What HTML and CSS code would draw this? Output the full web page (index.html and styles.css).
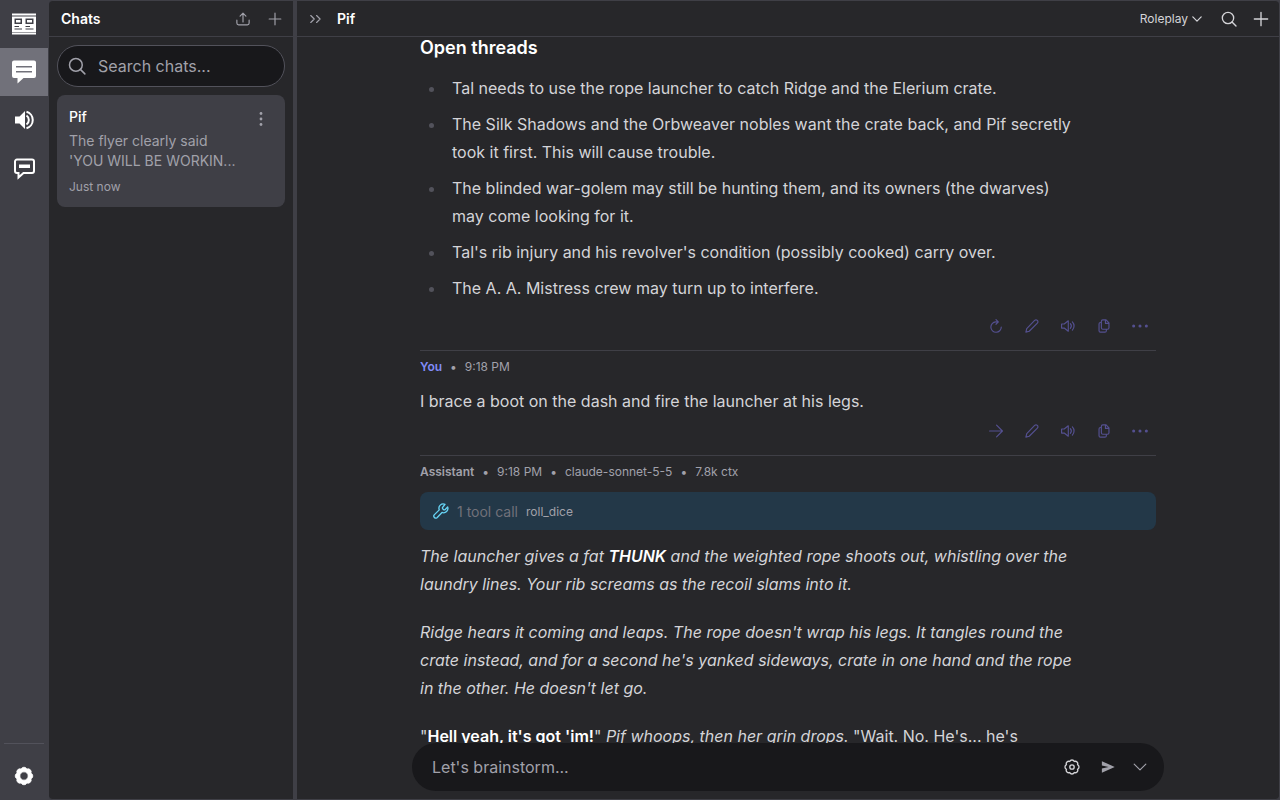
FILE: index.html
```html
<!DOCTYPE html>
<html lang="en">
<head>
    <meta charset="UTF-8">
    <meta name="viewport" content="width=device-width, initial-scale=1.0">
    <title>Pif - Chats</title>
    <link rel="stylesheet" href="styles.css">
</head>
<body>
    <!-- Shared icons -->
    <svg class="sprite" aria-hidden="true">
        <symbol id="plus" viewBox="0 0 24 24"><path d="M12 2v20M2 12h20"/></symbol>
        <symbol id="search" viewBox="0 0 24 24"><circle cx="10.5" cy="10.5" r="8.5"/><path d="M16.5 16.5l6 6"/></symbol>
        <symbol id="chevron" viewBox="0 0 24 24"><path d="M2 7l10 10L22 7"/></symbol>
        <symbol id="pencil" viewBox="0 0 24 24"><path d="M16.5 2.5a3.3 3.3 0 0 1 4.7 4.7L7.2 21 1.5 22.5 3 16.5z"/></symbol>
        <symbol id="speaker" viewBox="0 0 24 24"><path d="M1 8.5v7h4.5l7 5.5V3l-7 5.500zM16 8a6 6 0 0 1 0 8M19.5 5a10 10 0 0 1 0 14"/></symbol>
        <symbol id="copy" viewBox="0 0 24 24"><path d="M10 1.5h5.5l5 5V15a2.5 2.5 0 0 1-2.5 2.500h-8A2.5 2.5 0 0 1 7.500 15V4A2.500 2.500 0 0 1 10 1.500zM14.500 2v5.500H20M7.500 6H6a2.500 2.500 0 0 0-2.500 2.500V20A2.500 2.500 0 0 0 6 22.500h7.500A2.500 2.500 0 0 0 16 20v-2.500"/></symbol>
        <symbol id="dots" viewBox="0 0 24 24"><g fill="currentColor" stroke="none"><circle cx="2.5" cy="12" r="2.3"/><circle cx="12" cy="12" r="2.3"/><circle cx="21.5" cy="12" r="2.3"/></g></symbol>
    </svg>

    <div class="app">
        <nav class="rail" aria-label="Main">
            <a class="rail-link" href="#library" aria-label="Library">
                <svg class="icon-24" viewBox="0 0 24 24">
                    <path d="M0 2.500h24M0 21.500h24"/>
                    <path fill="currentColor" stroke="none" fill-rule="evenodd" d="M0 4.500h24V20H0zM2.500 6.500V12H10V6.500zM4 8h4.500v2.500H4zM13.500 6.500V12H21.500V6.500zM15 8h5v2.500h-5zM2.500 14v1H7v-1zM2.500 16.500v1H10v-1zM13.500 14v1H18v-1zM13.500 16.500v1h8v-1z"/>
                </svg>
            </a>
            <a class="rail-link active" href="#chats" aria-label="Chats">
                <svg class="icon-24" viewBox="0 0 24 24">
                    <path fill="currentColor" stroke="none" fill-rule="evenodd" d="M2 .5h20a2 2 0 0 1 2 2V16a2 2 0 0 1-2 2H11.5L5.5 23.5V18H2a2 2 0 0 1-2-2V2.5A2 2 0 0 1 2 .5zM4 6v1.500h16V6zM4 11v1.500h16V11z"/>
                </svg>
            </a>
            <a class="rail-link" href="#audio" aria-label="Audio">
                <svg class="icon-24" viewBox="0 0 24 24">
                    <path fill="currentColor" stroke="none" d="M3 8.500h4.500L13 3v18l-5.500-5.500H3z"/>
                    <path d="M14.500 7.500a5.500 5.500 0 0 1 0 9M14.500 3.800a8.500 8.500 0 0 1 0 16.400"/>
                </svg>
            </a>
            <a class="rail-link" href="#prompts" aria-label="Prompts">
                <svg class="icon-24" viewBox="0 0 24 24">
                    <path d="M5 3.500h15a2 2 0 0 1 2 2V15a2 2 0 0 1-2 2h-8.500L6.500 21.500V17H5a2 2 0 0 1-2-2V5.500a2 2 0 0 1 2-2z"/>
                    <rect x="7.500" y="9" width="10" height="2.500" stroke-width="1" fill="currentColor"/>
                </svg>
            </a>
            <div class="rail-bottom">
                <a class="rail-link" href="#settings" aria-label="Settings">
                    <svg class="icon-20" viewBox="0 0 24 24">
                        <path fill="currentColor" fill-rule="evenodd" stroke-width="1" d="M20.300 15.400a3.700 3.700 0 0 1-4.900 4.900 3.700 3.700 0 0 1-6.800 0 3.700 3.700 0 0 1-4.900-4.900 3.700 3.700 0 0 1 0-6.800 3.700 3.700 0 0 1 4.900-4.900 3.700 3.700 0 0 1 6.800 0 3.700 3.700 0 0 1 4.900 4.900 3.700 3.700 0 0 1 0 6.800zM17 12a5 5 0 1 0-10 0 5 5 0 0 0 10 0z"/>
                    </svg>
                </a>
            </div>
        </nav>

        <aside class="chats">
            <header class="bar">
                <h2>Chats</h2>
                <div class="bar-tools">
                    <button aria-label="Import chat">
                        <svg class="icon-14" viewBox="0 0 24 24"><path d="M12 17V2.500M7 7l5-5 5 5M1.500 14v5a3 3 0 0 0 3 3h15a3 3 0 0 0 3-3v-5"/></svg>
                    </button>
                    <button aria-label="New chat"><svg class="icon-14"><use href="#plus"/></svg></button>
                </div>
            </header>
            <label class="search">
                <svg class="icon-18"><use href="#search"/></svg>
                <input type="search" placeholder="Search chats..." aria-label="Search chats">
            </label>
            <article class="chat-card">
                <div class="card-text">
                    <h3>Pif</h3>
                    <p class="preview">The flyer clearly said 'YOU WILL BE WORKIN...</p>
                    <time>Just now</time>
                </div>
                <button class="card-menu" aria-label="Chat menu">
                    <svg class="icon-16" viewBox="0 0 16 16"><g fill="currentColor" stroke="none"><circle cx="8" cy="2.500" r="1.400"/><circle cx="8" cy="8" r="1.400"/><circle cx="8" cy="13.500" r="1.400"/></g></svg>
                </button>
            </article>
        </aside>

        <main class="conversation">
            <header class="bar">
                <button aria-label="Toggle chat list">
                    <svg class="icon-14" viewBox="0 0 24 24"><path d="M3 6l6 6-6 6M13 6l6 6-6 6"/></svg>
                </button>
                <h1>Pif</h1>
                <div class="bar-tools light">
                    <button class="mode">Roleplay <svg class="icon-10"><use href="#chevron"/></svg></button>
                    <button aria-label="Search messages"><svg class="icon-16"><use href="#search"/></svg></button>
                    <button aria-label="New message"><svg class="icon-16"><use href="#plus"/></svg></button>
                </div>
            </header>

            <div class="messages">
                <section class="message">
                    <div class="prose">
                        <h3>Open threads</h3>
                        <ul>
                            <li>Tal needs to use the rope launcher to catch Ridge and the Elerium crate.</li>
                            <li>The Silk Shadows and the Orbweaver nobles want the crate back, and Pif secretly took it first. This will cause trouble.</li>
                            <li>The blinded war-golem may still be hunting them, and its owners (the dwarves) may come looking for it.</li>
                            <li>Tal's rib injury and his revolver's condition (possibly cooked) carry over.</li>
                            <li>The A. A. Mistress crew may turn up to interfere.</li>
                        </ul>
                    </div>
                    <div class="actions">
                        <button aria-label="Regenerate"><svg class="icon-14" viewBox="0 0 24 24"><path d="M12 1l4 4-4 4M16 5h-4.500a8.900 8.900 0 1 0 9.500 9"/></svg></button>
                        <button aria-label="Edit"><svg class="icon-14"><use href="#pencil"/></svg></button>
                        <button aria-label="Read aloud"><svg class="icon-14"><use href="#speaker"/></svg></button>
                        <button aria-label="Copy"><svg class="icon-14"><use href="#copy"/></svg></button>
                        <button aria-label="More"><svg class="icon-16"><use href="#dots"/></svg></button>
                    </div>
                </section>

                <section class="message">
                    <div class="meta"><strong class="you">You</strong><span>•</span><time>9:18 PM</time></div>
                    <div class="prose">
                        <p>I brace a boot on the dash and fire the launcher at his legs.</p>
                    </div>
                    <div class="actions">
                        <button aria-label="Continue"><svg class="icon-14" viewBox="0 0 24 24"><path d="M1 12h22M13 2l10 10-10 10"/></svg></button>
                        <button aria-label="Edit"><svg class="icon-14"><use href="#pencil"/></svg></button>
                        <button aria-label="Read aloud"><svg class="icon-14"><use href="#speaker"/></svg></button>
                        <button aria-label="Copy"><svg class="icon-14"><use href="#copy"/></svg></button>
                        <button aria-label="More"><svg class="icon-16"><use href="#dots"/></svg></button>
                    </div>
                </section>

                <section class="message">
                    <div class="meta"><strong>Assistant</strong><span>•</span><time>9:18 PM</time><span>•</span><span>claude-sonnet-5-5</span><span>•</span><span>7.8k ctx</span></div>
                    <button class="tool-call">
                        <svg class="icon-16" viewBox="0 0 24 24"><path d="M14.500 6.500a1.400 1.400 0 0 0 0 2l1.500 1.500a1.400 1.400 0 0 0 2 0l4-4a6.500 6.500 0 0 1-8.500 8.200L6 22a3 3 0 0 1-4.200-4.200l7.600-7.500A6.500 6.500 0 0 1 18 1.900z"/></svg>
                        <span class="tool-count">1 tool call</span>
                        <span class="tool-name">roll_dice</span>
                    </button>
                    <div class="prose">
                        <p><em>The launcher gives a fat <strong>THUNK</strong> and the weighted rope shoots out, whistling over the laundry lines. Your rib screams as the recoil slams into it.</em></p>
                        <p><em>Ridge hears it coming and leaps. The rope doesn't wrap his legs. It tangles round the crate instead, and for a second he's yanked sideways, crate in one hand and the rope in the other. He doesn't let go.</em></p>
                        <p>"<strong>Hell yeah, it's got 'im!</strong>" <em>Pif whoops, then her grin drops.</em> "Wait. No. He's... he's</p>
                    </div>
                </section>
            </div>

            <form class="composer">
                <input type="text" placeholder="Let's brainstorm..." aria-label="Message">
                <button type="button" class="options" aria-label="Options">
                    <svg class="icon-16" viewBox="0 0 24 24"><path d="M20.300 15.400a3.700 3.700 0 0 1-4.900 4.900 3.700 3.700 0 0 1-6.800 0 3.700 3.700 0 0 1-4.900-4.900 3.700 3.700 0 0 1 0-6.800 3.700 3.700 0 0 1 4.900-4.900 3.700 3.700 0 0 1 6.800 0 3.700 3.700 0 0 1 4.900 4.900 3.700 3.700 0 0 1 0 6.800z"/><circle cx="12" cy="12" r="3.300"/></svg>
                </button>
                <button type="submit" class="send" aria-label="Send">
                    <svg class="icon-14" viewBox="0 0 24 24"><path fill="currentColor" stroke="none" d="M1.500 2L23.500 12 1.500 22V14.500L13 12 1.500 9.500z"/></svg>
                </button>
                <button type="button" class="send" aria-label="More options"><svg class="icon-14"><use href="#chevron"/></svg></button>
            </form>
        </main>
    </div>
</body>
</html>
```
FILE: styles.css
```css
* {
    box-sizing: border-box;
}

body {
    margin: 0;
    height: 100vh;
    overflow: hidden;
    background: #3f3f46;
    color: #d4d4d8;
    font-family: Inter, "Liberation Sans", sans-serif;
    font-size: 16px;
}

h1, h2, h3, p, ul {
    margin: 0;
    padding: 0;
}

button, input {
    font: inherit;
    color: inherit;
    background: none;
    border: 0;
    padding: 0;
    outline: none;
}

button {
    display: flex;
    align-items: center;
    justify-content: center;
    cursor: pointer;
}

svg {
    flex: none;
    fill: none;
    stroke: currentColor;
    stroke-width: 2;
    stroke-linecap: round;
    stroke-linejoin: round;
}

.sprite {
    position: absolute;
    width: 0;
    height: 0;
}

.icon-10 { width: 10px; height: 10px; stroke-width: 3; }
.icon-14 { width: 14px; height: 14px; }
.icon-16 { width: 16px; height: 16px; }
.icon-18 { width: 18px; height: 18px; }
.icon-20 { width: 20px; height: 20px; }
.icon-24 { width: 24px; height: 24px; }

.app {
    display: flex;
    height: 100%;
}

/* Left icon rail */
.rail {
    display: flex;
    flex-direction: column;
    width: 49px;
    padding-right: 1px;
    color: #fff;
}

.rail-link {
    display: flex;
    align-items: center;
    justify-content: center;
    height: 48px;
    color: inherit;
}

.rail-link svg {
    stroke-linecap: butt;
    stroke-linejoin: miter;
}

.rail-link.active {
    background: #71717a;
}

.rail-bottom {
    margin: auto 4px 0;
    padding-top: 8px;
    border-top: 1px solid #52525b;
}

/* Chat list */
.chats {
    width: 244px;
    background: #27272a;
    border: solid #3f3f46;
    border-width: 1px 0;
    border-radius: 4px 0 0 4px;
}

.bar {
    display: flex;
    align-items: center;
    height: 36px;
    padding: 0 11px 0 12px;
    border-bottom: 1px solid #3f3f46;
    color: #a1a1aa;
}

.bar h1, .bar h2 {
    color: #fff;
    font-size: 14px;
    font-weight: 600;
}

.bar-tools {
    display: flex;
    gap: 18px;
    margin-left: auto;
}

.search {
    display: flex;
    align-items: center;
    gap: 12px;
    height: 42px;
    margin: 8px;
    padding: 0 10px;
    border: 1px solid #52525b;
    border-radius: 21px;
    background: #18181b;
    color: #a1a1aa;
}

.search input {
    flex: 1;
    min-width: 0;
}

input::placeholder {
    color: #a1a1aa;
    opacity: 1;
}

.chat-card {
    display: flex;
    align-items: flex-start;
    gap: 8px;
    margin: 8px;
    padding: 12px;
    border-radius: 8px;
    background: #3f3f46;
    color: #a1a1aa;
}

.card-text {
    flex: 1;
    min-width: 0;
}

.chat-card h3 {
    color: #fff;
    font-size: 14px;
    font-weight: 500;
    line-height: 20px;
}

.preview {
    margin: 4px 0 8px;
    font-size: 14px;
    line-height: 20px;
}

.chat-card time {
    display: block;
    font-size: 12px;
    line-height: 16px;
}

.card-menu {
    width: 24px;
    height: 24px;
}

/* Conversation */
.conversation {
    display: flex;
    flex: 1;
    flex-direction: column;
    min-width: 0;
    margin: 0 1px 0 4px;
    border: solid #3f3f46;
    border-width: 1px 0;
    border-radius: 0 4px 4px 0;
    background: #27272a;
}

.conversation .bar {
    flex: none;
}

.conversation h1 {
    margin-left: 14px;
}

.bar-tools.light {
    gap: 16px;
    color: #d4d4d8;
}

.conversation .bar-tools {
    margin-right: -1px;
}

.mode {
    gap: 4px;
    margin-right: 3px;
    font-size: 12px;
}

.messages {
    flex: 1;
    width: 100%;
    max-width: 736px;
    min-height: 0;
    margin: 0 auto;
    overflow: hidden;
}

.message + .message {
    border-top: 1px solid #3f3f46;
}

.prose {
    max-width: 656px;
    line-height: 28px;
}

.prose h3 {
    padding-bottom: 7px;
    color: #fff;
    font-size: 18px;
    font-weight: 600;
    line-height: 22px;
}

.prose li {
    margin: 8px 0;
    padding-left: 6px;
}

.prose ul {
    padding-left: 26px;
}

.prose li::marker {
    color: #52525b;
}

.prose p + p {
    margin-top: 20px;
}

.prose strong {
    color: #fff;
    font-weight: 600;
}

.actions {
    display: flex;
    justify-content: flex-end;
    gap: 12px;
    padding: 4px;
    margin-bottom: 8px;
    color: #545090;
}

.actions button {
    width: 24px;
    height: 24px;
}

.meta {
    display: flex;
    gap: 8px;
    padding: 6px 0 10px;
    color: #a1a1aa;
    font-size: 12px;
    line-height: 20px;
}

.meta strong {
    font-weight: 600;
}

.meta .you {
    color: #818cf8;
}

.tool-call {
    justify-content: flex-start;
    gap: 8px;
    width: 100%;
    height: 38px;
    margin-bottom: 12px;
    padding: 0 13px;
    border-radius: 8px;
    background: #233848;
    color: #67d4f5;
}

.tool-count {
    color: #71717a;
    font-size: 14px;
}

.tool-name {
    color: #a1a1aa;
    font-size: 12px;
}

.composer {
    display: flex;
    align-items: center;
    gap: 16px;
    width: 100%;
    max-width: 752px;
    height: 48px;
    margin: 0 auto 8px;
    padding: 0 16px 0 20px;
    border-radius: 24px;
    background: #18181b;
}

.composer input {
    flex: 1;
    min-width: 0;
}

.options {
    width: 24px;
}

.send {
    width: 16px;
    color: #a1a1aa;
}
```
